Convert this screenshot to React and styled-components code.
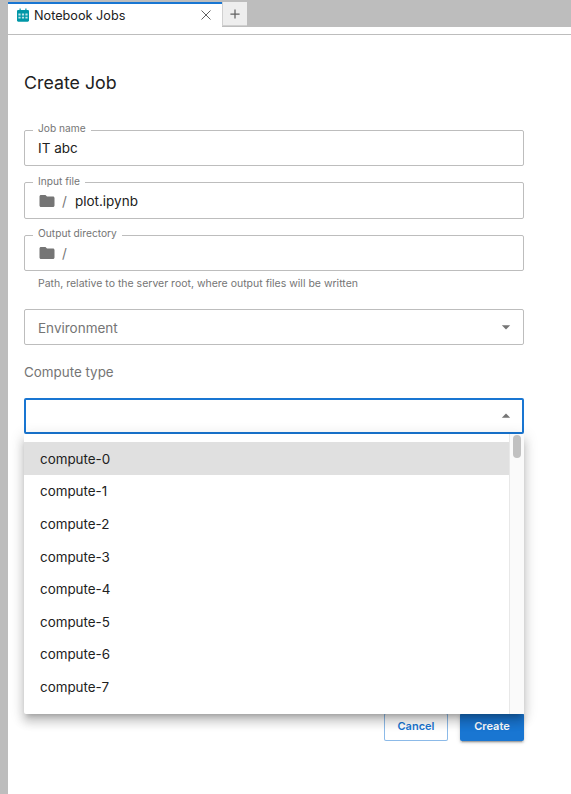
import React from 'react';
import styled, { createGlobalStyle } from 'styled-components';

const GlobalStyle = createGlobalStyle`
  html, body {
    margin: 0;
    height: 100%;
    background: #fff;
    font-family: Inter, "Liberation Sans", sans-serif;
    color: #212121;
  }
`;

const computeTypes = Array.from({ length: 8 }, (_, i) => `compute-${i}`);

function FolderIcon() {
  return (
    <FolderSvg viewBox="0 0 24 24">
      <path d="M10 4H4c-1.1 0-1.99.9-1.99 2L2 18c0 1.1.9 2 2 2h16c1.1 0 2-.9 2-2V8c0-1.1-.9-2-2-2h-8l-2-2z" />
    </FolderSvg>
  );
}

function CalendarIcon() {
  return (
    <TabIcon viewBox="0 0 12 14">
      <path d="M1.2 2h1.3V.6h1.2V2h4.6V.6h1.2V2h1.3c.6 0 1.2.5 1.2 1.2v9.4c0 .7-.6 1.2-1.2 1.2H1.2C.6 13.8 0 13.3 0 12.6V3.2C0 2.5.6 2 1.2 2z" />
      <path
        fill="#fff"
        opacity=".75"
        d="M1.4 5.6h2.2v1.9H1.4zM4.9 5.6h2.2v1.9H4.9zM8.4 5.6h2.2v1.9H8.4zM1.4 8.7h2.2v1.9H1.4zM4.9 8.7h2.2v1.9H4.9zM8.4 8.7h2.2v1.9H8.4z"
      />
    </TabIcon>
  );
}

function Caret({ up }) {
  return (
    <CaretSvg viewBox="0 0 24 24">
      <path d={up ? 'M7 14l5-5 5 5z' : 'M7 10l5 5 5-5z'} />
    </CaretSvg>
  );
}

function OutlinedField({ label, children }) {
  return (
    <Fieldset>
      <Legend>{label}</Legend>
      <FieldRow>{children}</FieldRow>
    </Fieldset>
  );
}

export default function App() {
  return (
    <Page>
      <GlobalStyle />
      <TabBar>
        <Tab>
          <CalendarIcon />
          <TabLabel>Notebook Jobs</TabLabel>
          <CloseIcon viewBox="0 0 10 10">
            <path d="M.5.5l9 9M9.5.5l-9 9" />
          </CloseIcon>
        </Tab>
        <AddTab>
          <PlusIcon viewBox="0 0 12 12">
            <path d="M6 .5v11M.5 6h11" />
          </PlusIcon>
        </AddTab>
      </TabBar>
      <Toolbar />
      <Content>
        <Title>Create Job</Title>
        <PathFields>
          <OutlinedField label="Job name">IT abc</OutlinedField>
          <OutlinedField label="Input file">
            <FolderIcon />
            <Slash>/</Slash>
            plot.ipynb
          </OutlinedField>
          <OutlinedField label="Output directory">
            <FolderIcon />
            <Slash>/</Slash>
          </OutlinedField>
        </PathFields>
        <Helper>Path, relative to the server root, where output files will be written</Helper>
        <SelectBox>
          <Placeholder>Environment</Placeholder>
          <Caret />
        </SelectBox>
        <SectionLabel>Compute type</SectionLabel>
        <ComputeSelect>
          <SelectBox $focused>
            <Caret up />
          </SelectBox>
          <Listbox>
            <Options>
              {computeTypes.map((name, i) => (
                <Option key={name} $active={i === 0}>{name}</Option>
              ))}
            </Options>
            <ScrollTrack>
              <ScrollThumb />
            </ScrollTrack>
          </Listbox>
        </ComputeSelect>
        <CoveredField />
        <Actions>
          <CancelButton>Cancel</CancelButton>
          <CreateButton>Create</CreateButton>
        </Actions>
      </Content>
    </Page>
  );
}

const Page = styled.div`
  height: 794px;
  overflow: hidden;
  border-left: 8px solid #bdbdbd;
  background: #fff;
`;

const TabBar = styled.div`
  display: flex;
  align-items: flex-start;
  height: 25px;
  padding-top: 2px;
  background: #bdbdbd;
`;

const Tab = styled.div`
  display: flex;
  align-items: center;
  box-sizing: border-box;
  width: 214px;
  height: 25px;
  padding: 0 11px 1px 10px;
  border-top: 2px solid #1976d2;
  background: #fff;
`;

const TabIcon = styled.svg`
  width: 12px;
  height: 14px;
  margin-left: -1px;
  margin-right: 5px;
  fill: #0097a7;
`;

const TabLabel = styled.span`
  flex: 1;
  font-size: 12.7px;
  color: #212121;
`;

const CloseIcon = styled.svg`
  width: 10px;
  height: 10px;
  fill: none;
  stroke: #616161;
  stroke-width: 1;
`;

const AddTab = styled.div`
  display: flex;
  align-items: center;
  justify-content: center;
  box-sizing: border-box;
  width: 25px;
  height: 24px;
  border-left: 1px solid #d0d0d0;
  border-bottom: 1px solid #d0d0d0;
  background: #eeeeee;
`;

const PlusIcon = styled.svg`
  width: 10px;
  height: 10px;
  fill: none;
  stroke: #616161;
  stroke-width: 1.5;
`;

const Toolbar = styled.div`
  height: 7px;
  border-bottom: 1px solid #bdbdbd;
`;

const Content = styled.main`
  display: flex;
  flex-direction: column;
  width: 500px;
  padding-left: 16px;
`;

const Title = styled.h1`
  margin: 37px 0 0;
  font-size: 17.8px;
  line-height: 22px;
  font-weight: 400;
  color: #212121;
`;

const PathFields = styled.div`
  display: flex;
  flex-direction: column;
  gap: 9.5px;
  margin-top: 29px;
`;

const Fieldset = styled.fieldset`
  margin: 0;
  padding: 0 13px 6px;
  border: 1px solid #bdbdbd;
  border-radius: 2px;
  min-width: 0;
`;

const Legend = styled.legend`
  margin-left: -5px;
  padding: 0 5px 3px;
  font-size: 10.2px;
  line-height: 11px;
  color: #757575;
`;

const FieldRow = styled.div`
  display: flex;
  align-items: center;
  height: 22px;
  font-size: 13.5px;
  color: #212121;
`;

const FolderSvg = styled.svg`
  width: 18px;
  height: 18px;
  fill: #757575;
`;

const Slash = styled.span`
  margin: 0 8px 0 6px;
  color: #757575;
`;

const Helper = styled.p`
  margin: 6px 0 0;
  padding-left: 14px;
  font-size: 10.5px;
  line-height: 14px;
  color: #757575;
`;

const SelectBox = styled.div`
  display: flex;
  align-items: center;
  box-sizing: border-box;
  height: 36px;
  margin-top: ${(p) => (p.$focused ? '0' : '18px')};
  padding-left: ${(p) => (p.$focused ? '12px' : '13px')};
  padding-right: ${(p) => (p.$focused ? '6px' : '7px')};
  border: ${(p) => (p.$focused ? '2px solid #1976d2' : '1px solid #bdbdbd')};
  border-radius: 2px;
`;

const Placeholder = styled.span`
  padding-top: 2px;
  font-size: 13.5px;
  color: #757575;
`;

const CaretSvg = styled.svg`
  width: 20px;
  height: 20px;
  margin-left: auto;
  fill: #757575;
`;

const SectionLabel = styled.div`
  margin-top: 18px;
  font-size: 13.4px;
  line-height: 18px;
  color: #757575;
`;

const ComputeSelect = styled.div`
  position: relative;
  margin-top: 17px;
`;

const Listbox = styled.div`
  position: absolute;
  top: 36px;
  left: 0;
  right: 0;
  z-index: 2;
  display: flex;
  height: 280px;
  background: #fff;
  border-radius: 0 0 2px 2px;
  box-shadow: 0 5px 5px -3px rgba(0, 0, 0, 0.2), 0 8px 10px 1px rgba(0, 0, 0, 0.14),
    0 3px 14px 2px rgba(0, 0, 0, 0.12);
`;

const Options = styled.ul`
  flex: 1;
  margin: 0;
  padding: 8px 0 0;
  list-style: none;
`;

const Option = styled.li`
  display: flex;
  align-items: center;
  box-sizing: border-box;
  height: 32.6px;
  padding: 1px 0 0 16px;
  font-size: 13.4px;
  color: #212121;
  background: ${(p) => (p.$active ? '#e0e0e0' : 'transparent')};
`;

const ScrollTrack = styled.div`
  box-sizing: border-box;
  width: 15px;
  padding: 1px 3px 0 3px;
  border-left: 1px solid #e8e8e8;
  background: #fafafa;
`;

const ScrollThumb = styled.div`
  height: 23px;
  border-radius: 4px;
  background: #c1c1c1;
`;

const CoveredField = styled.div`
  height: 48px;
  margin-top: 87px;
  border: 1px solid #bdbdbd;
  border-radius: 2px;
`;

const Actions = styled.div`
  display: flex;
  justify-content: flex-end;
  gap: 12px;
  margin-top: 142px;
`;

const ActionButton = styled.button`
  box-sizing: border-box;
  width: 64px;
  height: 28px;
  padding: 0 0 2px;
  border-radius: 2px;
  font-family: inherit;
  font-size: 11px;
  font-weight: 600;
`;

const CancelButton = styled(ActionButton)`
  border: 1px solid rgba(25, 118, 210, 0.5);
  background: #fff;
  color: #1976d2;
`;

const CreateButton = styled(ActionButton)`
  border: none;
  background: #1976d2;
  color: #fff;
  box-shadow: 0 3px 1px -2px rgba(0, 0, 0, 0.2), 0 2px 2px 0 rgba(0, 0, 0, 0.14),
    0 1px 5px 0 rgba(0, 0, 0, 0.12);
`;
